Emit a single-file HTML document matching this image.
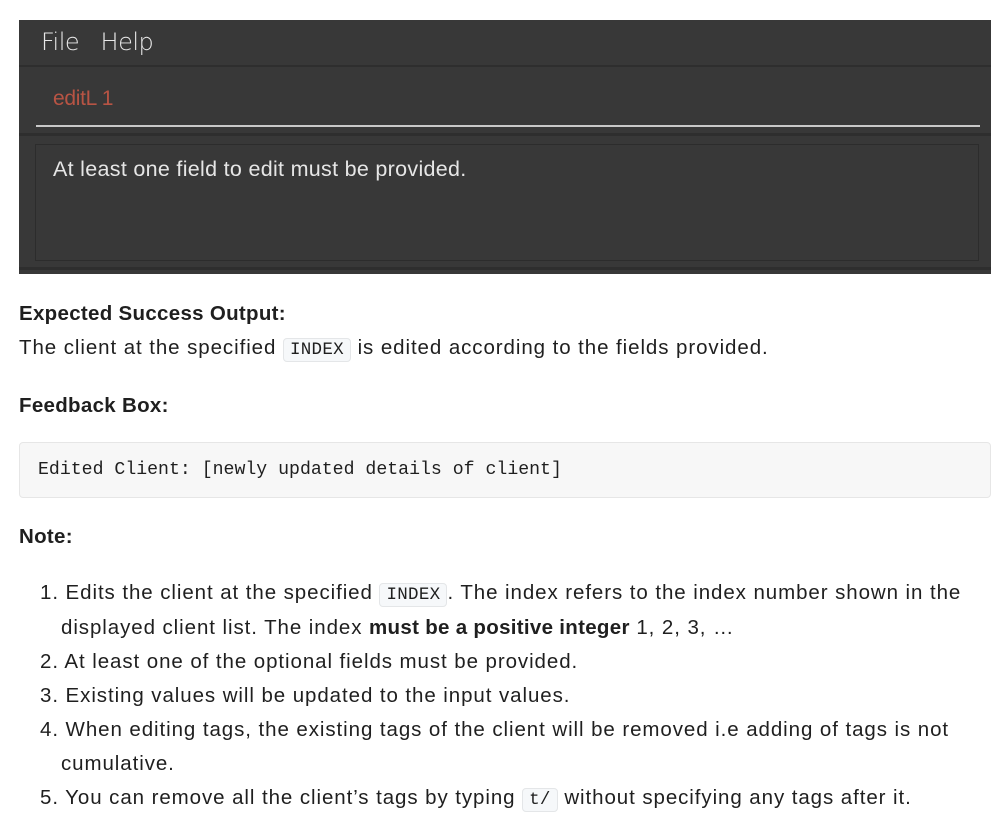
<!DOCTYPE html>
<html><head><meta charset="utf-8"><style>
body{margin:0;width:1002px;height:830px;background:#fff;position:relative;overflow:hidden;font-family:"Liberation Sans",sans-serif;color:#1f1f1f}
.a{position:absolute;white-space:nowrap}
.t{font-size:20.5px;line-height:34px;letter-spacing:0.92px}
code{font-family:"Liberation Mono",monospace;font-size:17.5px;letter-spacing:0.3px;background:#f6f8fa;border:1px solid #e4e6e8;border-radius:4px;padding:1px 6px}
b{font-weight:bold;letter-spacing:0.3px}
</style></head><body>
<div class="a" style="left:19px;top:20px;width:972px;height:254px;background:#383838"></div>
<div class="a" style="left:19px;top:65px;width:972px;height:2px;background:#2e2e2e"></div>
<div class="a" style="left:19px;top:133px;width:972px;height:3px;background:#2e2e2e"></div>
<div class="a" style="left:19px;top:267px;width:972px;height:3px;background:#2e2e2e"></div>
<div class="a" style="left:41px;top:28px;font-size:24px;color:#e8e8e8;font-family:'DejaVu Sans',sans-serif;font-weight:300;letter-spacing:-0.5px">File&nbsp;&nbsp;&nbsp;Help</div>
<div class="a" style="left:53px;top:87px;font-size:21px;color:#b85444;letter-spacing:-0.3px">editL 1</div>
<div class="a" style="left:36px;top:125px;width:944px;height:2px;background:#c8c8c8"></div>
<div class="a" style="left:35px;top:144px;width:942px;height:115px;border:1px solid #2c2c2c"></div>
<div class="a" style="left:53px;top:157px;font-size:21.5px;color:#e6e6e6;letter-spacing:0.3px">At least one field to edit must be provided.</div>

<div class="a t" style="left:19px;top:297px"><b>Expected Success Output:</b></div>
<div class="a t" style="left:19px;top:331px">The client at the specified <code>INDEX</code> is edited according to the fields provided.</div>
<div class="a t" style="left:19px;top:389px"><b>Feedback Box:</b></div>
<div class="a" style="left:19px;top:442px;width:970px;height:54px;background:#f7f7f7;border:1px solid #e6e6e6;border-radius:4px"></div>
<div class="a" style="left:38px;top:460px;font-family:'Liberation Mono',monospace;font-size:18.2px">Edited Client: [newly updated details of client]</div>
<div class="a t" style="left:19px;top:520px"><b>Note:</b></div>
<div class="a t" style="left:40px;top:576px">1. Edits the client at the specified <code>INDEX</code>. The index refers to the index number shown in the</div>
<div class="a t" style="left:61px;top:611px">displayed client list. The index <b>must be a positive integer</b> 1, 2, 3, …</div>
<div class="a t" style="left:40px;top:645px">2. At least one of the optional fields must be provided.</div>
<div class="a t" style="left:40px;top:679px">3. Existing values will be updated to the input values.</div>
<div class="a t" style="left:40px;top:713px">4. When editing tags, the existing tags of the client will be removed i.e adding of tags is not</div>
<div class="a t" style="left:61px;top:747px">cumulative.</div>
<div class="a t" style="left:40px;top:781px">5. You can remove all the client’s tags by typing <code>t/</code> without specifying any tags after it.</div>
</body></html>
